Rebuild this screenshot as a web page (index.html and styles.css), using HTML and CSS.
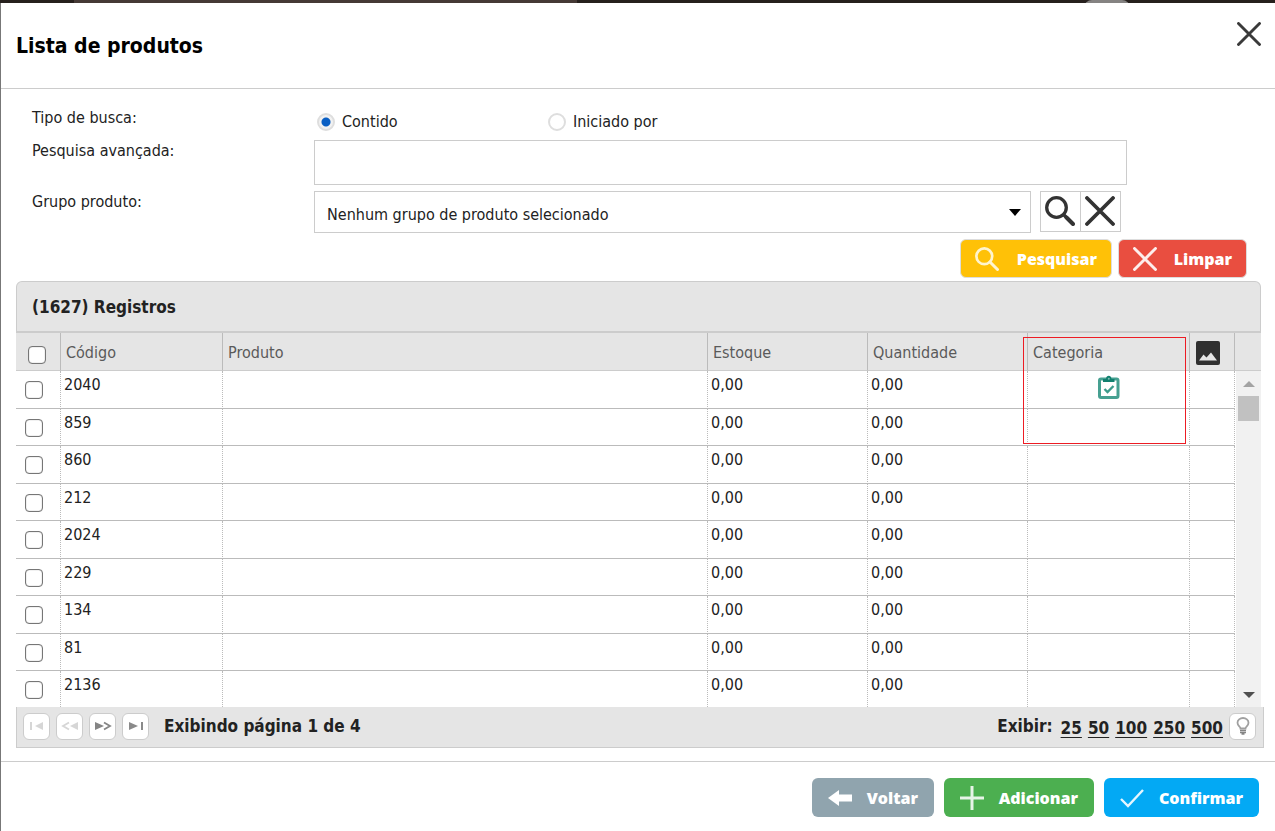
FILE: index.html
```
<!DOCTYPE html>
<html lang="pt-BR">
<head>
<meta charset="utf-8">
<title>Lista de produtos</title>
<link rel="stylesheet" href="styles.css">
</head>
<body>
<div class="backdrop"><span class="backdrop-tab"></span><span class="backdrop-knob"></span></div>
<main class="modal">
  <header class="modal-header">
    <h1>Lista de produtos</h1>
    <button class="close" type="button" aria-label="Fechar"><svg viewBox="0 0 24 24" width="24" height="24"><path d="M1.500 1.500 22.500 22.500M22.500 1.500 1.500 22.500" stroke="#3a3a3a" stroke-width="2.900" stroke-linecap="round"/></svg></button>
  </header>

  <form class="search">
    <div class="row row-radio">
      <span class="label">Tipo de busca:</span>
      <div class="radios">
        <label><input type="radio" name="tipo" checked>Contido</label>
        <label><input type="radio" name="tipo">Iniciado por</label>
      </div>
    </div>
    <div class="row">
      <label class="label" for="pesquisa">Pesquisa avançada:</label>
      <input class="text" id="pesquisa" type="text">
    </div>
    <div class="row row-group">
      <label class="label" for="grupo">Grupo produto:</label>
      <div class="group">
        <div class="select">
          <select id="grupo"><option>Nenhum grupo de produto selecionado</option></select>
          <svg class="caret" viewBox="0 0 12 7" width="12" height="7"><path d="M0 0H12L6 7Z"/></svg>
        </div>
        <div class="tools">
          <button type="button" aria-label="Buscar grupo"><svg viewBox="0 0 30 30" width="30" height="30" fill="none" stroke="#333" stroke-width="3.300"><circle cx="11.500" cy="11.500" r="9.800"/><path d="M19 19 21.500 21.500"/><path d="M21.500 21.500 28 28" stroke-width="4" stroke-linecap="round"/></svg></button>
          <button type="button" aria-label="Limpar grupo"><svg viewBox="0 0 30 30" width="30" height="30" stroke="#333" stroke-width="3.800" stroke-linecap="round"><path d="M2 2 28 28M28 2 2 28"/></svg></button>
        </div>
      </div>
    </div>
    <div class="actions">
      <button class="btn yellow" type="button"><svg viewBox="0 0 24 24" width="24" height="24" fill="none" stroke="#fff4cf" stroke-width="2.700"><circle cx="9.300" cy="9.300" r="7.900"/><path d="M15 15 22.500 22.500" stroke-width="3" stroke-linecap="round"/></svg>Pesquisar</button>
      <button class="btn red" type="button"><svg viewBox="0 0 24 24" width="24" height="24" stroke="#fdeeec" stroke-width="2.900" stroke-linecap="round"><path d="M1.500 1.500 22.500 22.500M22.500 1.500 1.500 22.500"/></svg>Limpar</button>
    </div>
  </form>

  <section class="grid">
    <h2>(1627) Registros</h2>
    <div class="table-wrap">
      <table>
        <colgroup><col class="c-check"><col class="c-code"><col><col class="c-stock"><col class="c-qty"><col class="c-cat"><col class="c-img"><col class="c-scroll"></colgroup>
        <thead><tr>
          <th><input type="checkbox" aria-label="Selecionar todos"></th><th>Código</th><th>Produto</th><th>Estoque</th><th>Quantidade</th><th>Categoria</th>
          <th class="image"><svg viewBox="0 0 24 24" width="24" height="24"><rect width="24" height="24" rx="2" fill="#303030"/><path d="M3 19.500 7.500 13.500 10.500 16.500 15 11.500 21 19.500Z" fill="#e5e5e5"/></svg></th><th></th>
        </tr></thead>
        <tbody>
          <tr><td><input type="checkbox" aria-label="2040"></td><td>2040</td><td></td><td>0,00</td><td>0,00</td>
            <td class="status"><svg viewBox="0 0 22 24" width="22" height="24"><rect x="1.500" y="4" width="18.500" height="18.500" rx="1.500" fill="#fff" stroke="#46a091" stroke-width="3"/><path d="M5 4H8C8.200-.4 13.300-.4 13.500 4H16.500V7H5Z" fill="#12806f"/><path d="M6.500 14 9.500 17 15.500 11" fill="none" stroke="#3c9b8b" stroke-width="2.400"/><circle cx="10.800" cy="3.700" r="1" fill="#80bdb4"/></svg></td><td></td>
            <td class="scroll" rowspan="9"><div class="scrollbar">
              <svg viewBox="0 0 12 6" width="12" height="6"><path d="M0 6H12L6 0Z" fill="#a3a3a3"/></svg>
              <span class="thumb"></span>
              <svg class="down" viewBox="0 0 12 6" width="12" height="6"><path d="M0 0H12L6 6Z" fill="#505050"/></svg>
            </div></td></tr>
          <tr><td><input type="checkbox" aria-label="859"></td><td>859</td><td></td><td>0,00</td><td>0,00</td><td></td><td></td></tr>
          <tr><td><input type="checkbox" aria-label="860"></td><td>860</td><td></td><td>0,00</td><td>0,00</td><td></td><td></td></tr>
          <tr><td><input type="checkbox" aria-label="212"></td><td>212</td><td></td><td>0,00</td><td>0,00</td><td></td><td></td></tr>
          <tr><td><input type="checkbox" aria-label="2024"></td><td>2024</td><td></td><td>0,00</td><td>0,00</td><td></td><td></td></tr>
          <tr><td><input type="checkbox" aria-label="229"></td><td>229</td><td></td><td>0,00</td><td>0,00</td><td></td><td></td></tr>
          <tr><td><input type="checkbox" aria-label="134"></td><td>134</td><td></td><td>0,00</td><td>0,00</td><td></td><td></td></tr>
          <tr><td><input type="checkbox" aria-label="81"></td><td>81</td><td></td><td>0,00</td><td>0,00</td><td></td><td></td></tr>
          <tr><td><input type="checkbox" aria-label="2136"></td><td>2136</td><td></td><td>0,00</td><td>0,00</td><td></td><td></td></tr>
        </tbody>
      </table>
      <div class="highlight"></div>
    </div>
    <div class="pager">
      <button type="button" aria-label="Primeira" disabled><svg viewBox="0 0 16 10" width="16" height="10" fill="#d6d6d6"><path d="M1 1H3V9H1ZM14 1V9L6 5Z"/></svg></button>
      <button type="button" aria-label="Anterior" disabled><svg viewBox="0 0 18 10" width="18" height="10" fill="#d6d6d6"><path d="M17 1V9L9 5Z"/><path d="M8 1.500 2 5 8 8.500" fill="none" stroke="#d6d6d6" stroke-width="1.800"/></svg></button>
      <button type="button" aria-label="Próxima"><svg viewBox="0 0 18 10" width="18" height="10" fill="#858585"><path d="M1 1V9L10 5Z"/><path d="M10 1.500 16 5 10 8.500" fill="none" stroke="#858585" stroke-width="1.800"/></svg></button>
      <button type="button" aria-label="Última"><svg viewBox="0 0 16 10" width="16" height="10" fill="#8a8a8a"><path d="M1 1V9L10 5ZM13 1H15V9H13Z"/></svg></button>
      <span class="page-info">Exibindo página 1 de 4</span>
      <span class="show">Exibir:</span>
      <nav class="sizes"><a href="#">25</a><a href="#">50</a><a href="#">100</a><a href="#">250</a><a href="#">500</a></nav>
      <button type="button" aria-label="Dica"><svg viewBox="0 0 14 18" width="14" height="18" fill="none" stroke="#a0a0a0" stroke-width="1.800"><path d="M4.500 11.500C4.500 9.500 1.500 9 1.500 5.800A5.500 4.800 0 0 1 12.500 5.800C12.500 9 9.500 9.500 9.500 11.500Z"/><path d="M4 13.500H10M4 15.500H10M5.500 17H8.500" stroke="#858585" stroke-width="1.300"/></svg></button>
    </div>
  </section>

  <footer class="modal-footer">
    <button class="btn gray" type="button"><svg viewBox="0 0 24 24" width="24" height="24" fill="#fff"><path d="M0 12 11 4V8.500H24V15.500H11V20Z"/></svg>Voltar</button>
    <button class="btn green" type="button"><svg viewBox="0 0 24 24" width="24" height="24" stroke="#e6f4e7" stroke-width="3"><path d="M12 0V24M0 12H24"/></svg>Adicionar</button>
    <button class="btn blue" type="button"><svg viewBox="0 0 24 24" width="24" height="24" fill="none" stroke="#e6f6ff" stroke-width="2.400"><path d="M1 13 8 20 23 4"/></svg>Confirmar</button>
  </footer>
</main>
</body>
</html>
```
FILE: styles.css
```
* { box-sizing: border-box; }
body {
  margin: 0;
  background: #777;
  color: #222;
  font: 16px/22px "DejaVu Sans Condensed", "Noto Sans", sans-serif;
}
svg { display: block; }
button, input, select { font: inherit; color: inherit; margin: 0; }
button { padding: 0; }

.backdrop { display: flex; height: 3px; background: #26201d; overflow: hidden; }
.backdrop-tab { width: 503px; margin-left: 74px; background: #453935; }
.backdrop-knob { width: 46px; height: 46px; margin: 0 145px 0 auto; border-radius: 8px; background: #858382; }

.modal { margin-left: 1px; min-height: calc(100vh - 3px); background: #fff; }
.modal-header {
  display: flex;
  justify-content: space-between;
  align-items: center;
  height: 86px;
  padding: 0 14px 0 15px;
  border-bottom: 1px solid #ccc;
}
h1 { margin: 0; font-size: 21px; line-height: 28px; color: #000; }
.close { border: 0; background: none; margin-bottom: 24px; }

.search { padding: 18px 0 3px 31px; }
.row { display: grid; grid-template-columns: 282px 1fr; margin: 0 148px 6px 0; }
.row-radio { margin-bottom: 0; height: 33px; }
.radios { display: flex; line-height: 30px; }
.radios label { display: flex; align-items: center; gap: 7px; width: 231px; padding-left: 3px; height: 30px; }
.radios input {
  appearance: none;
  width: 18px;
  height: 18px;
  border: 2px solid #dedede;
  border-radius: 50%;
  background: #fff;
}
.radios input:checked { background: radial-gradient(circle, #0a5fc4 4px, #f2f2f2 5px); }
.text { width: 100%; height: 45px; padding: 0 12px; border: 1px solid #ccc; background: #fff; }
.group { display: flex; gap: 9px; padding-right: 6px; }
.select { position: relative; flex: 1; }
.select select {
  appearance: none;
  width: 100%;
  height: 42px;
  padding: 6px 40px 0 12px;
  border: 1px solid #ccc;
  border-radius: 0;
  background: #fff;
}
.caret { position: absolute; right: 10px; top: 18px; pointer-events: none; }
.tools { display: flex; }
.tools button {
  display: grid;
  place-items: center;
  width: 41px;
  height: 41px;
  padding: 0 1px 1px 0;
  border: 1px solid #ccc;
  background: #fff;
}
.tools button + button { margin-left: -1px; }

.btn {
  display: flex;
  align-items: center;
  justify-content: space-between;
  height: 39px;
  padding: 0 16px;
  border: 0;
  border-radius: 6px;
  color: #fff;
  font: 800 16px/22px "Open Sans", "Noto Sans", sans-serif;
}
.actions { display: flex; justify-content: flex-end; gap: 6px; padding-right: 28px; }
.actions .btn { border: 1px solid #ddd; padding: 0 14px; }
.yellow { width: 152px; background: #ffc107; }
.red { width: 129px; background: #e94e40; }

.grid { margin: 0 11px 13px 15px; }
h2 {
  margin: 0 3px 0 0;
  padding: 14px 15px 13px;
  border: 1px solid #ccc;
  border-bottom-width: 2px;
  border-radius: 6px 6px 0 0;
  background: #e5e5e5;
  font-size: 17px;
  line-height: 22px;
}
.table-wrap { position: relative; margin-right: 3px; }
table { width: 100%; border-collapse: separate; border-spacing: 0; table-layout: fixed; }
.c-check { width: 45px; }
.c-code { width: 162px; }
.c-stock { width: 160px; }
.c-qty { width: 160px; }
.c-cat { width: 162px; }
.c-img { width: 45px; }
.c-scroll { width: 26px; }
th {
  height: 38px;
  padding: 3px 5px 0;
  border-right: 1px solid #bbb;
  border-bottom: 1px solid #ccc;
  background: #e5e5e5;
  color: #5a5a5a;
  font-weight: 400;
  text-align: left;
}
th:first-child { padding: 6px 0 0 12px; }
th.image { padding: 2px 0 0 6px; }
th:last-child, td.scroll { border-right: 0; }
td {
  height: 37px;
  padding: 3px 3px 0;
  border-right: 1px dotted #bbb;
  border-bottom: 1px solid #bbb;
  vertical-align: top;
}
tbody tr:nth-child(odd) td { height: 38px; }
tbody tr:last-child td { height: 36px; border-bottom: 0; }
td:first-child { padding: 10px 0 0 9px; }
td.status { padding: 4px 0 0 70px; }
input[type="checkbox"] {
  appearance: none;
  display: block;
  width: 18px;
  height: 18px;
  border: 1px solid #767676;
  border-radius: 4px;
  background: #fff;
  box-shadow: inset 0 0 1px #767676;
}
tbody td.scroll { height: 1px; padding: 0 0 0 1px; border-bottom: 0; }
.scrollbar {
  display: flex;
  flex-direction: column;
  align-items: center;
  height: 336px;
  padding: 10px 0 9px;
  background: #f1f1f1;
}
.thumb { width: 21px; height: 25px; margin-top: 9px; background: #c1c1c1; }
.down { margin-top: auto; }
.highlight {
  position: absolute;
  top: 4px;
  right: 75px;
  width: 163px;
  height: 107px;
  border: 1px solid #ed1c24;
  pointer-events: none;
}

.pager {
  display: flex;
  align-items: center;
  gap: 6px;
  height: 41px;
  padding: 0 7px 2px 6px;
  border: solid #ccc;
  border-width: 0 1px 1px;
  background: #e5e5e5;
  font-size: 17px;
  font-weight: 700;
}
.pager button {
  display: grid;
  place-items: center;
  width: 27px;
  height: 27px;
  border: 1px solid #ccc;
  border-radius: 6px;
  background: #fff;
}
.page-info { margin: 0 auto 0 9px; }
.sizes { display: flex; gap: 6px; padding: 4px 0 0 2px; }
.sizes a { color: #222; text-decoration-thickness: 1px; text-underline-offset: 3px; }

.modal-footer {
  display: flex;
  justify-content: flex-end;
  gap: 10px;
  padding: 16px 16px 14px;
  border-top: 1px solid #ccc;
}
.gray { width: 122px; background: #90a4ae; }
.green { width: 150px; background: #4caf50; }
.blue { width: 155px; background: #03a9f4; }
```
